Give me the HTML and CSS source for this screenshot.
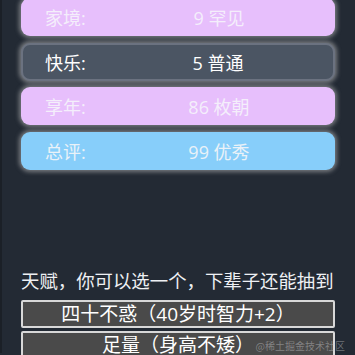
FILE: index.html
```html
<!DOCTYPE html>
<html lang="zh">
<head>
    <meta charset="UTF-8">
    <title>人生重开</title>
    <link rel="stylesheet" href="styles.css">
</head>
<body>
    <div class="page">
        <div class="stats">
            <div class="stat pink"><span class="label">家境:</span><span class="value">9 罕见</span></div>
            <div class="stat normal"><span class="label">快乐:</span><span class="value">5 普通</span></div>
            <div class="stat pink"><span class="label">享年:</span><span class="value">86 枚朝</span></div>
            <div class="stat blue"><span class="label">总评:</span><span class="value">99 优秀</span></div>
        </div>

        <div class="talents">
            <h2>天赋，你可以选一个，下辈子还能抽到</h2>
            <button class="talent">四十不惑（40岁时智力+2）</button>
            <button class="talent">足量（身高不矮）</button>
        </div>
    </div>
    <div class="watermark">@稀土掘金技术社区</div>
</body>
</html>
```

FILE: styles.css
```css
body {
    margin: 0;
    background: #232a34;
    font-family: "Open Sans", "Noto Sans CJK SC", sans-serif;
    color: #eef0f3;
    height: 355px;
    overflow: hidden;
}

.page {
    border-left: 2px solid #1b2027;
    height: 100%;
    padding: 0 20px 0 19px;
}

.stats {
    display: flex;
    flex-direction: column;
    gap: 6.5px;
    margin-top: -2px;
}

.stat {
    display: grid;
    grid-template-columns: 58px 1fr;
    align-items: center;
    height: 38px;
    box-sizing: border-box;
    padding-left: 24px;
    border-radius: 9px;
    font-size: 18px;
    box-shadow: 0 0 4px 2px rgba(190, 190, 190, 0.55);
}

.stat .value {
    text-align: center;
}

.pink {
    background: #e7bffc;
    color: #f4eefb;
}

.blue {
    background: #87cefa;
    color: #eaf2f8;
}

.normal {
    background: #4b5563;
    border: 2px solid #6b7280;
    padding-left: 22px;
    color: #ffffff;
}

.talents {
    margin-top: 99px;
}

.talents h2 {
    margin: 0 0 7px;
    font-size: 18.4px;
    font-weight: normal;
    white-space: nowrap;
    line-height: 24px;
}

.talent {
    display: block;
    width: 100%;
    height: 28px;
    margin-bottom: 3px;
    padding: 0;
    background: #4a4a4a;
    border: 2px solid #d8d8d8;
    border-radius: 2px;
    color: #ffffff;
    font-family: "Open Sans", "Noto Sans CJK SC", sans-serif;
    font-size: 19px;
    line-height: 22px;
}

.watermark {
    position: absolute;
    right: 10px;
    bottom: 2px;
    font-family: "Noto Sans CJK SC", sans-serif;
    font-size: 10px;
    color: rgba(200, 200, 200, 0.45);
}
```
